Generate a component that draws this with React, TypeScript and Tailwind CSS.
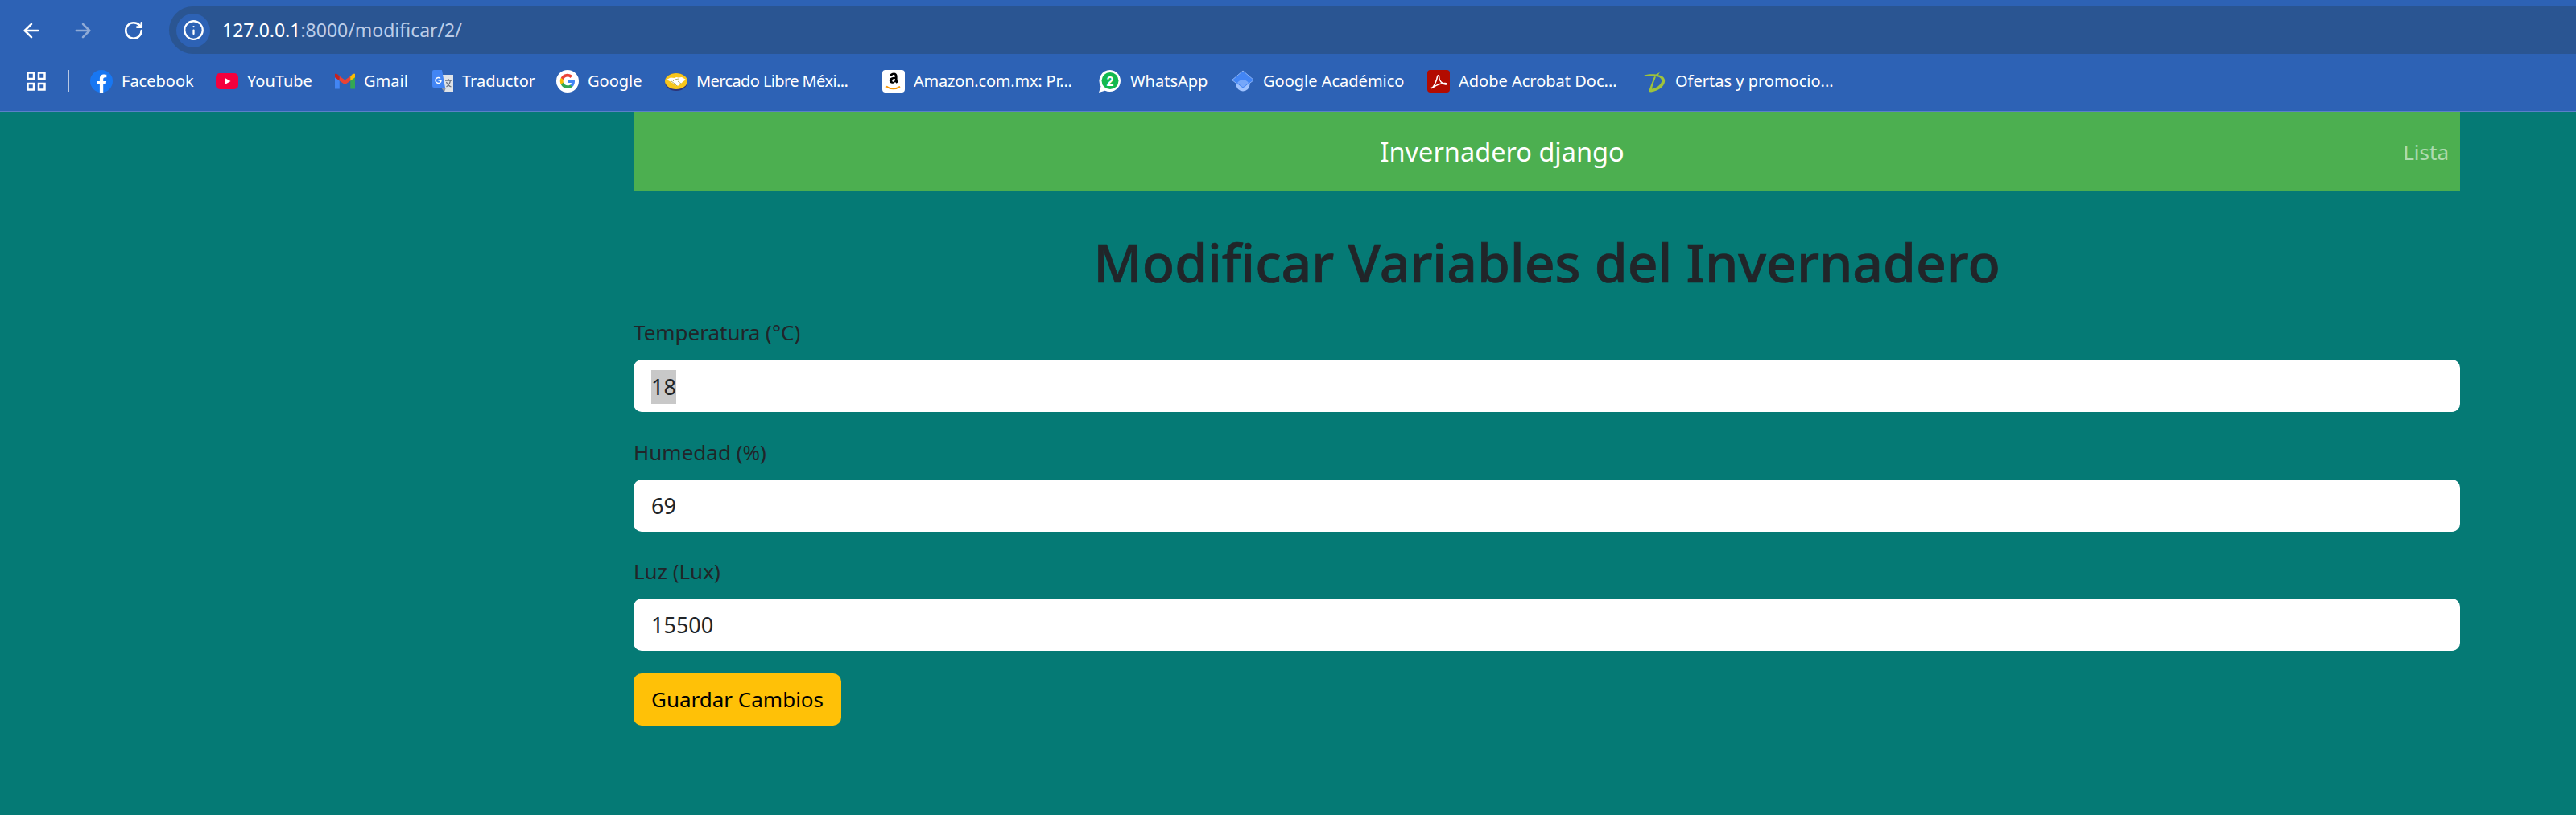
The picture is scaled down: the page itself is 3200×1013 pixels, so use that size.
import { ArrowLeft, ArrowRight, RotateCw, Info } from 'lucide-react'
import type { ReactNode } from 'react'

function FacebookIcon() {
  return (
    <svg viewBox="0 0 28 28" className="w-7 h-7">
      <circle cx="14" cy="14" r="14" fill="#1877f2" />
      <path d="M19.5 18l.6-4h-3.900v-2.600c0-1.100.5-2.200 2.300-2.200h1.800V5.800s-1.600-.3-3.100-.3c-3.200 0-5.300 1.900-5.300 5.400V14H8.400v4h3.500v10h4.300V18z" fill="#fff" />
    </svg>
  )
}

function YouTubeIcon() {
  return (
    <svg viewBox="0 0 28 28" className="w-7 h-7">
      <rect x="0" y="4" width="28" height="20" rx="5" fill="#f4003d" />
      <path d="M11.5 10l7 4-7 4z" fill="#fff" />
    </svg>
  )
}

function GmailIcon() {
  return (
    <svg viewBox="0 0 26 28" className="w-[25px] h-7">
      <path d="M0 8v16h6V11z" fill="#4285f4" />
      <path d="M20 11v13h6V8z" fill="#34a853" />
      <path d="M0 4.500V9l6 4.500V7.500L3 5C1.700 4 0 4.500 0 4.500z" fill="#c5221f" />
      <path d="M6 7.500v6l7 5 7-5v-6l-7 5z" fill="#ea4335" />
      <path d="M20 7.500v6l6-4.500V4.500S24.300 4 23 5z" fill="#fbbc04" />
    </svg>
  )
}

function TranslateIcon() {
  return (
    <svg viewBox="0 0 26 28" className="w-[26px] h-7">
      <path d="M12 6h14v21H15z" fill="#dfe3e8" />
      <path d="M2 0h10l4 22H2a2 2 0 0 1-2-2V2a2 2 0 0 1 2-2z" fill="#4285f4" />
      <path d="M11 22l4 5.500 2-5.500z" fill="#8a94a6" />
      <path d="M16 13h8M20 11v2M17.500 21c3-2 4.500-4.500 5-8M17.500 15c1 2.500 3 5 6 6" stroke="#6b7280" strokeWidth="1.300" fill="none" />
      <path d="M10 10.500a3.500 3.500 0 1 0 1 2.500H7.500" stroke="#fff" strokeWidth="1.500" fill="none" />
    </svg>
  )
}

function GoogleIcon() {
  return (
    <svg viewBox="0 0 28 28" className="w-7 h-7">
      <circle cx="14" cy="14" r="14" fill="#fff" />
      <path d="M23 14.200c0-.7-.1-1.300-.2-1.900H14v3.600h5a4.300 4.300 0 0 1-1.900 2.800v2.300h3c1.800-1.600 2.900-4 2.900-6.800z" fill="#4285f4" />
      <path d="M14 23c2.500 0 4.600-.8 6.100-2.300l-3-2.300c-.8.600-1.900.9-3.100.9-2.400 0-4.400-1.600-5.100-3.800H5.800v2.400A9 9 0 0 0 14 23z" fill="#34a853" />
      <path d="M8.900 15.500a5.400 5.400 0 0 1 0-3.400V9.700H5.800a9 9 0 0 0 0 8.200z" fill="#fbbc05" />
      <path d="M14 8.500c1.300 0 2.500.5 3.500 1.400l2.600-2.600A9 9 0 0 0 5.800 9.700l3.100 2.400C9.600 10 11.600 8.500 14 8.500z" fill="#ea4335" />
    </svg>
  )
}

function MercadoIcon() {
  return (
    <svg viewBox="0 0 28 28" className="w-7 h-7">
      <ellipse cx="14" cy="15" rx="14" ry="11" fill="#2d3277" />
      <ellipse cx="14" cy="14" rx="14" ry="10" fill="#f7c61c" />
      <path d="M2 12l5-2.500 5 .5 2-1 3 .5 4-.5 5 3-3.500 2.500-5.500 5h-3l-4-3-4-2.500z" fill="#fff" />
      <path d="M8 14l4 3 3 3M17 11l-5 1-2 2M16 14l4 3" stroke="#b9ad62" strokeWidth="1" fill="none" />
    </svg>
  )
}

function AmazonIcon() {
  return (
    <svg viewBox="0 0 28 28" className="w-7 h-7">
      <rect width="28" height="28" rx="4" fill="#fff" />
      <path d="M14.500 3.500c-2.700 0-5 1.200-5.300 3.800l3 .3c.2-1 .9-1.500 1.900-1.500 1.200 0 1.700.8 1.700 2v.7c-3.600.1-7 1-7 4.500 0 2.300 1.500 3.500 3.500 3.500 1.700 0 2.800-.7 3.700-1.800l1.700 1.700 2.200-2c-.7-.8-1.300-1.400-1.300-2.600V7.800c0-2.500-1.700-4.300-4.100-4.300zm1.300 8c0 1.800-.7 3.300-2.100 3.300-.9 0-1.400-.6-1.400-1.600 0-1.900 1.700-2.200 3.500-2.200z" fill="#000" />
      <path d="M5 20.500c5 3.800 12 3.800 17 .3" stroke="#f79400" strokeWidth="1.800" fill="none" />
    </svg>
  )
}

function WhatsAppIcon() {
  return (
    <svg viewBox="0 0 28 28" className="w-7 h-7">
      <path d="M14 0a13.500 13.500 0 0 0-11.500 20.500L0 28l7.700-2.300A13.500 13.500 0 1 0 14 0z" fill="#fff" />
      <circle cx="14" cy="13.500" r="10.500" fill="#13b94f" />
      <text x="14" y="19.500" textAnchor="middle" fontSize="16" fontWeight="700" fill="#fff" fontFamily="Liberation Sans, sans-serif">2</text>
    </svg>
  )
}

function ScholarIcon() {
  return (
    <svg viewBox="0 0 28 28" className="w-7 h-7">
      <circle cx="14" cy="18" r="8.500" fill="#a0c3ff" />
      <path d="M14 1l13.500 11.500L14 23 .5 12.500z" fill="#4285f4" stroke="#a0c3ff" strokeWidth=".8" />
      <path d="M7 16a8.500 8.500 0 0 1 14 0l-7 5.500z" fill="#76a7fa" />
    </svg>
  )
}

function AcrobatIcon() {
  return (
    <svg viewBox="0 0 28 28" className="w-7 h-7">
      <rect width="28" height="28" rx="4" fill="#b30b00" />
      <path d="M5.500 22.500c2.500-1 6-8.500 7-14 .4-2.300 2.300-2.300 2.200 0-.2 4.500 3.500 9 8 9.500 1.500.2 1.500-1.500 0-1.500-5-.3-10 1.500-15.500 5-1.500 1-2.500.8-1.700 1z" stroke="#fff" strokeWidth="1.500" fill="none" />
    </svg>
  )
}

function OfertasIcon() {
  return (
    <svg viewBox="0 0 29 28" className="w-[29px] h-7">
      <path d="M1 6.500c6-1.500 11-1.500 15-1 3-1 5-3 6-5l-3 5.800C25 7 28 11 27 15c-1 6-8 11-17 12.500L7 27c2-6 5-14 7-19l2 .5c-2 5-4 10-5 15 6-1 11-5 12-9 .8-4-3-7-9-6.500C10 8 5 8 1 6.500z" fill="#9fc33b" />
    </svg>
  )
}

const BOOKMARKS: { label: string; icon: ReactNode; width: string; text?: string }[] = [
  { label: 'Facebook', icon: <FacebookIcon />, width: 'w-[156px]' },
  { label: 'YouTube', icon: <YouTubeIcon />, width: 'w-[148px]' },
  { label: 'Gmail', icon: <GmailIcon />, width: 'w-[121px]' },
  { label: 'Traductor', icon: <TranslateIcon />, width: 'w-[154px]' },
  { label: 'Google', icon: <GoogleIcon />, width: 'w-[135px]' },
  { label: 'Mercado Libre Méxi...', icon: <MercadoIcon />, width: 'w-[270px]', text: 'tracking-[-0.6px]' },
  { label: 'Amazon.com.mx: Pr...', icon: <AmazonIcon />, width: 'w-[269px]', text: 'tracking-[-0.2px]' },
  { label: 'WhatsApp', icon: <WhatsAppIcon />, width: 'w-[165px]' },
  { label: 'Google Académico', icon: <ScholarIcon />, width: 'w-[243px]' },
  { label: 'Adobe Acrobat Doc...', icon: <AcrobatIcon />, width: 'w-[268px]' },
  { label: 'Ofertas y promocio...', icon: <OfertasIcon />, width: 'w-[260px]' },
]

function AppsIcon() {
  return (
    <svg viewBox="0 0 24 24" className="w-6 h-6" fill="none" stroke="#fff" strokeWidth="2.500">
      <rect x="1.500" y="1.500" width="7.500" height="7.500" />
      <rect x="15" y="1.500" width="7.500" height="7.500" />
      <rect x="1.500" y="15" width="7.500" height="7.500" />
      <rect x="15" y="15" width="7.500" height="7.500" />
    </svg>
  )
}

function BrowserChrome() {
  return (
    <div className="h-[139px] bg-[#2d62b5] border-b border-[#5a80c8] flex flex-col">
      <div className="h-[68px] pt-2 flex">
        <div className="w-[210px] h-[59px] flex items-center pl-[25px] gap-[36px] text-white shrink-0">
          <ArrowLeft size={28} strokeWidth={2.2} />
          <ArrowRight size={28} strokeWidth={2.2} className="text-[#8faad6]" />
          <RotateCw size={26} strokeWidth={2.4} />
        </div>
        <div className="flex-1 h-[59px] rounded-l-full bg-[#2a5592] flex items-center pl-[9px]">
          <div className="w-[42px] h-[42px] rounded-full bg-[#2d62b5] flex items-center justify-center text-white">
            <Info size={27} strokeWidth={2} />
          </div>
          <span className="ml-[15px] text-[23px] text-white">
            127.0.0.1<span className="text-[#bccde8]">:8000/modificar/2/</span>
          </span>
        </div>
      </div>
      <div className="flex items-center h-[62px] pl-[33px] pt-[3px]">
        <AppsIcon />
        <div className="ml-[27px] mr-[26px] w-[2px] h-[27px] bg-[#b9c9e4]" />
        {BOOKMARKS.map(b => (
          <div key={b.label} className={`flex items-center gap-[11px] shrink-0 ${b.width}`}>
            {b.icon}
            <span className={`text-[20px] text-white whitespace-nowrap ${b.text ?? ''}`}>{b.label}</span>
          </div>
        ))}
      </div>
    </div>
  )
}

function Field({ label, value, selected }: { label: string; value: string; selected?: boolean }) {
  return (
    <div className="mb-[29.5px]">
      <div className="h-[41px] leading-[41px] mb-[13px] text-[26px] text-[#212529]">{label}</div>
      <div className="h-[65px] rounded-[10px] bg-white flex items-center px-[22px] pt-[2px] text-[27px] text-[#212529]">
        <span className={selected ? 'bg-[#c8c8c8] h-[42px] leading-[42px]' : ''}>{value}</span>
      </div>
    </div>
  )
}

export default function App() {
  return (
    <div className="w-[3200px] h-[1013px] overflow-hidden bg-[#057a75] font-['Noto_Sans','Open_Sans',sans-serif]">
      <BrowserChrome />
      <div className="ml-[787px] w-[2269px]">
        <nav className="h-[98px] bg-[#4caf50] flex items-center">
          <div className="flex-1 text-center text-[32.5px] text-white pr-[40px] pt-[2px]">Invernadero django</div>
          <a className="pr-[14px] pt-[2px] text-[26px] text-white/55">Lista</a>
        </nav>
        <h1 className="mt-[47px] mb-[27px] text-center text-[66px] leading-[82px] font-medium text-[#212529] [-webkit-text-stroke:0.7px_#212529]">
          Modificar Variables del Invernadero
        </h1>
        <Field label="Temperatura (°C)" value="18" selected />
        <Field label="Humedad (%)" value="69" />
        <Field label="Luz (Lux)" value="15500" />
        <button className="-mt-[1.5px] block w-[258px] h-[65px] rounded-[10px] bg-[#ffc107] text-[26px] text-black">
          Guardar Cambios
        </button>
      </div>
    </div>
  )
}
